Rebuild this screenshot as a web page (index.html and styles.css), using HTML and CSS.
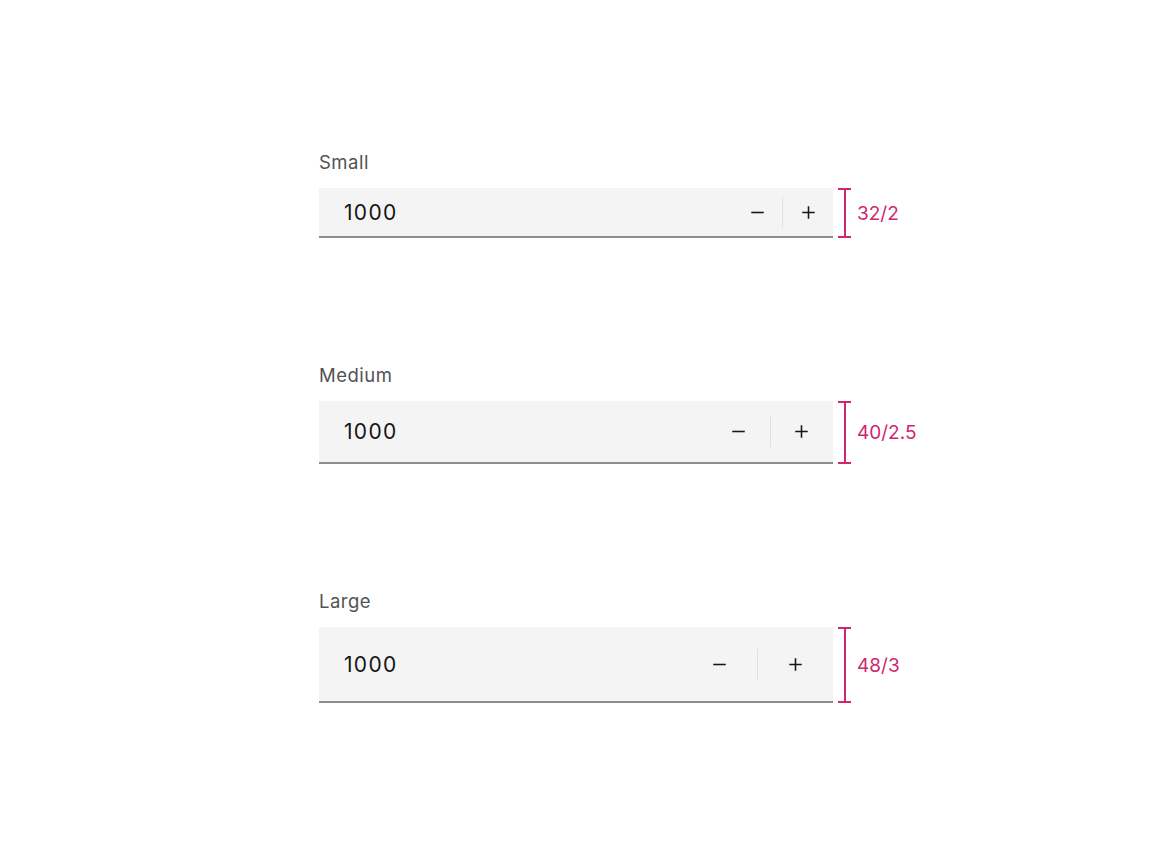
FILE: index.html
```html
<!DOCTYPE html>
<html lang="en">
<head>
<meta charset="utf-8">
<title>Number input sizes</title>
<link rel="stylesheet" href="styles.css">
</head>
<body>
<main class="sizes">
  <section class="group">
    <div class="label">Small</div>
    <div class="field field-sm">
      <span class="value">1000</span>
      <div class="controls">
        <button class="step" aria-label="Decrement">
          <svg viewBox="0 0 32 32" class="icon"><path d="M8 15h16v2H8z"/></svg>
        </button>
        <span class="divider"></span>
        <button class="step" aria-label="Increment">
          <svg viewBox="0 0 32 32" class="icon"><path d="M17 15V8h-2v7H8v2h7v7h2v-7h7v-2z"/></svg>
        </button>
      </div>
      <div class="spec"><span class="bracket"></span><span class="spec-text">32/2</span></div>
    </div>
  </section>
  <section class="group">
    <div class="label">Medium</div>
    <div class="field field-md">
      <span class="value">1000</span>
      <div class="controls">
        <button class="step" aria-label="Decrement">
          <svg viewBox="0 0 32 32" class="icon"><path d="M8 15h16v2H8z"/></svg>
        </button>
        <span class="divider"></span>
        <button class="step" aria-label="Increment">
          <svg viewBox="0 0 32 32" class="icon"><path d="M17 15V8h-2v7H8v2h7v7h2v-7h7v-2z"/></svg>
        </button>
      </div>
      <div class="spec"><span class="bracket"></span><span class="spec-text">40/2.5</span></div>
    </div>
  </section>
  <section class="group">
    <div class="label">Large</div>
    <div class="field field-lg">
      <span class="value">1000</span>
      <div class="controls">
        <button class="step" aria-label="Decrement">
          <svg viewBox="0 0 32 32" class="icon"><path d="M8 15h16v2H8z"/></svg>
        </button>
        <span class="divider"></span>
        <button class="step" aria-label="Increment">
          <svg viewBox="0 0 32 32" class="icon"><path d="M17 15V8h-2v7H8v2h7v7h2v-7h7v-2z"/></svg>
        </button>
      </div>
      <div class="spec"><span class="bracket"></span><span class="spec-text">48/3</span></div>
    </div>
  </section>
</main>
</body>
</html>
```

FILE: styles.css
```css
* { box-sizing: border-box; }

html, body {
  margin: 0;
  padding: 0;
  background: #ffffff;
}

body {
  font-family: "Inter", "Noto Sans", "Liberation Sans", sans-serif;
  color: #161616;
}

.sizes {
  width: 514px;
  margin: 0 auto;
  padding-top: 150px;
  display: flex;
  flex-direction: column;
  gap: 125px;
}

.label {
  font-size: 18.5px;
  line-height: 25px;
  height: 25px;
  letter-spacing: 0.5px;
  color: #525252;
  margin-bottom: 13px;
}

.field {
  position: relative;
  display: flex;
  align-items: center;
  background: #f4f4f4;
  border-bottom: 2px solid #8d8d8d;
  padding-left: 25px;
}

.field-sm { height: 50px; --btn: 50px; }
.field-md { height: 63px; --btn: 62.5px; }
.field-lg { height: 76px; --btn: 75px; }

.value {
  flex: 1;
  font-size: 21px;
  letter-spacing: 1.3px;
  color: #161616;
}

.controls {
  display: flex;
  align-items: center;
  height: 100%;
}

.step {
  width: var(--btn);
  height: 100%;
  border: 0;
  padding: 0;
  margin: 0;
  background: transparent;
  display: flex;
  align-items: center;
  justify-content: center;
}

.icon {
  width: 25px;
  height: 25px;
  fill: #161616;
}

.divider {
  width: 1px;
  height: 31px;
  background: #e0e0e0;
}

.spec {
  position: absolute;
  left: 100%;
  top: 0;
  bottom: -2px;
  margin-left: 5px;
  display: flex;
  align-items: center;
  gap: 6px;
}

.bracket {
  position: relative;
  width: 13px;
  height: 100%;
  border-top: 2px solid #d02670;
  border-bottom: 2px solid #d02670;
}

.bracket::before {
  content: "";
  position: absolute;
  left: 5.5px;
  top: 0;
  bottom: 0;
  width: 2px;
  background: #d02670;
}

.spec-text {
  font-size: 19px;
  color: #d02670;
  white-space: nowrap;
}
```
